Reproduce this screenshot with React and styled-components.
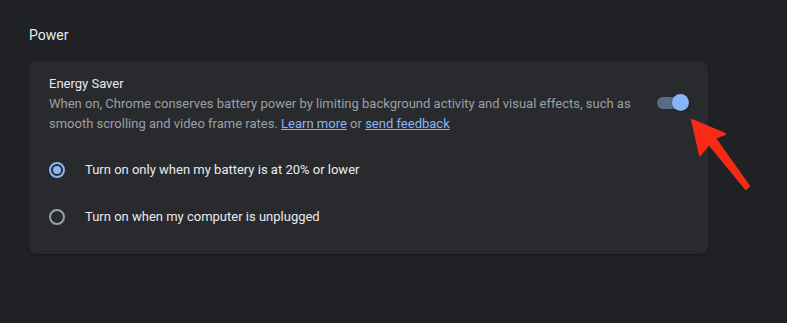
import React, { useState } from 'react';
import styled, { createGlobalStyle } from 'styled-components';

const GlobalStyle = createGlobalStyle`
  html, body {
    margin: 0;
    padding: 0;
    background: #202124;
  }
  body {
    font-family: Roboto, "Liberation Sans", sans-serif;
    -webkit-font-smoothing: antialiased;
  }
`;

const Page = styled.div`
  position: relative;
  width: 787px;
  height: 323px;
  background: #202124;
  padding: 26px 0 0 29px;
  box-sizing: border-box;
`;

const SectionTitle = styled.h2`
  margin: 0 0 17px;
  font-size: 14px;
  font-weight: 400;
  line-height: 18px;
  color: #e8eaed;
`;

const Card = styled.div`
  width: 679px;
  box-sizing: border-box;
  background: #292a2d;
  border-radius: 8px;
  box-shadow: 0 1px 2px rgba(0, 0, 0, 0.35);
  padding: 13px 20px 14px;
`;

const SettingRow = styled.div`
  display: flex;
  align-items: center;
  justify-content: space-between;
`;

const SettingText = styled.div`
  width: 596px;
`;

const SettingLabel = styled.div`
  font-size: 13px;
  line-height: 20px;
  color: #e8eaed;
`;

const SettingDesc = styled.div`
  font-size: 13px;
  line-height: 20px;
  color: #9aa0a6;
`;

const TextLink = styled.a`
  color: #8ab4f8;
  text-decoration: underline;
  cursor: pointer;
`;

const Toggle = styled.button`
  position: relative;
  width: 31px;
  height: 12px;
  padding: 0;
  border: none;
  border-radius: 6px;
  background: ${p => (p.$on ? '#5a6a89' : '#5f6368')};
  cursor: pointer;
  margin-top: -2px;

  &::after {
    content: '';
    position: absolute;
    top: -3px;
    left: ${p => (p.$on ? '15px' : '-2px')};
    width: 17px;
    height: 17px;
    border-radius: 50%;
    background: ${p => (p.$on ? '#8ab4f8' : '#dadce0')};
    box-shadow: 0 1px 2px rgba(0, 0, 0, 0.4);
  }
`;

const RadioList = styled.div`
  display: flex;
  flex-direction: column;
  margin-top: 12px;
`;

const RadioRow = styled.label`
  display: flex;
  align-items: center;
  gap: 20px;
  height: 47px;
  cursor: pointer;
`;

const RadioCircle = styled.span`
  width: 16px;
  height: 16px;
  box-sizing: border-box;
  border-radius: 50%;
  border: 2px solid ${p => (p.$checked ? '#8ab4f8' : '#9aa0a6')};
  display: flex;
  align-items: center;
  justify-content: center;

  &::after {
    content: '';
    width: 8px;
    height: 8px;
    border-radius: 50%;
    background: ${p => (p.$checked ? '#8ab4f8' : 'transparent')};
  }
`;

const RadioText = styled.span`
  font-size: 13px;
  color: #e8eaed;
`;

const Arrow = styled.svg`
  position: absolute;
  left: 690px;
  top: 116px;
`;

const options = [
  'Turn on only when my battery is at 20% or lower',
  'Turn on when my computer is unplugged',
];

const App = () => {
  const [on, setOn] = useState(true);
  const [selected, setSelected] = useState(0);

  return (
    <>
      <GlobalStyle />
      <Page>
        <SectionTitle>Power</SectionTitle>
        <Card>
          <SettingRow>
            <SettingText>
              <SettingLabel>Energy Saver</SettingLabel>
              <SettingDesc>
                When on, Chrome conserves battery power by limiting background activity and visual effects, such as
                smooth scrolling and video frame rates. <TextLink>Learn more</TextLink> or{' '}
                <TextLink>send feedback</TextLink>
              </SettingDesc>
            </SettingText>
            <Toggle $on={on} onClick={() => setOn(!on)} aria-label="Energy Saver" />
          </SettingRow>
          <RadioList>
            {options.map((opt, i) => (
              <RadioRow key={opt} onClick={() => setSelected(i)}>
                <RadioCircle $checked={selected === i} />
                <RadioText>{opt}</RadioText>
              </RadioRow>
            ))}
          </RadioList>
        </Card>
        <Arrow width="64" height="76" viewBox="0 0 64 76">
          <path
            d="M2 4 L35 18 L25 22 L59 70 L56 73 L19 28 L10 39 Z"
            fill="#f62a16"
            stroke="#f62a16"
            strokeWidth="2"
            strokeLinejoin="round"
          />
        </Arrow>
      </Page>
    </>
  );
};

export default App;
